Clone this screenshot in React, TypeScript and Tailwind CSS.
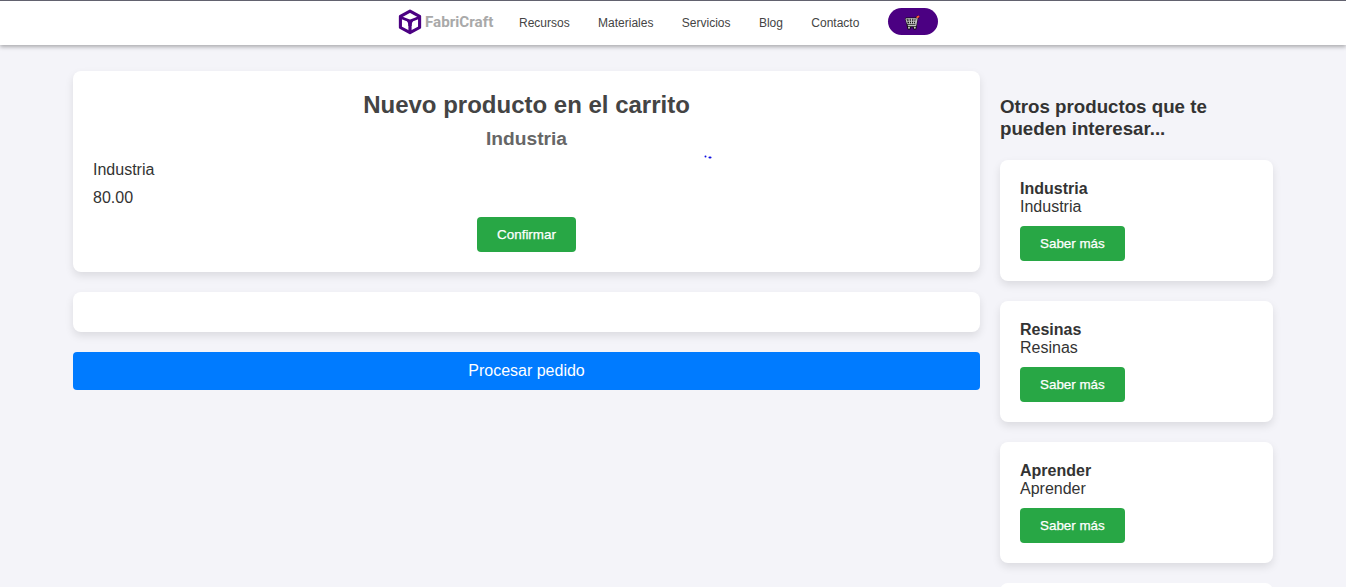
const navLinks = ["Recursos", "Materiales", "Servicios", "Blog", "Contacto"];
const suggestions = ["Industria", "Resinas", "Aprender"];

function Logo() {
  return (
    <svg className="h-[26px] w-6 shrink-0" viewBox="0 0 24 26" fill="none" stroke="#4b0082">
      <path d="M12 2.1 21.6 7.3V18.5L12 23.7 2.4 18.5V7.3Z" strokeWidth="3.1" strokeLinejoin="round" />
      <path d="M3 8.5C7 10.2 9.2 11 12 12 14.8 11 17 10.2 21 8.5" strokeWidth="2.7" />
      <path d="M12 12V23" strokeWidth="3.2" />
      <path d="M7.6 11C9.6 12.4 10.4 14 10.4 17H13.6C13.6 14 14.4 12.4 16.4 11Z" fill="#4b0082" stroke="none" />
    </svg>
  );
}

function CartIcon() {
  return (
    <svg className="mt-[2px] mr-[2px] h-[15px] w-4" viewBox="0 0 16 15" fill="none" strokeLinecap="round" strokeLinejoin="round">
      <path d="M2.5 3.8H12L11.2 9H3.8ZM14 2 12.6 3 11.5 10.8H4" stroke="#111" strokeWidth="2.8" fill="#111" />
      <circle cx="5" cy="12.8" r="1.9" fill="#111" />
      <circle cx="10.8" cy="12.8" r="1.9" fill="#111" />
      <path d="M2.3 3.8H12.2L11.4 8.8H3.8ZM3 6.2H11.5M5 3.8 5.6 8.7M7.5 3.8V8.7M10 3.8 9.5 8.7" stroke="#c4c4c4" strokeWidth="1" />
      <path d="M13.2 2.6 11.7 10.6H4.2" stroke="#c4c4c4" strokeWidth="1.1" />
      <path d="M13.4 2.1 14.4 1.6" stroke="#ff5140" strokeWidth="2" />
      <circle cx="5" cy="12.8" r="1" fill="#c9c9c9" />
      <circle cx="10.8" cy="12.8" r="1" fill="#c9c9c9" />
    </svg>
  );
}

function GreenButton({ label }: { label: string }) {
  return (
    <button className="block h-[35px] rounded-[4px] bg-[#28a745] px-5 text-[13.4px] leading-[15px] text-white [-webkit-text-stroke:0.25px_white]">
      {label}
    </button>
  );
}

export default function App() {
  return (
    <div className="h-[587px] overflow-hidden bg-[#f4f4f9] font-['Liberation_Sans',Arial,sans-serif] text-[#333]">
      <header className="relative flex h-[45px] border-t border-[#62626f] bg-white pl-[398px] shadow-[0_2px_4px_rgba(0,0,0,0.3)]">
        <div className="flex h-[42px] w-[121px] items-center gap-[3px]">
          <Logo />
          <span className="text-[15.2px] font-bold text-[#a9a9a9] [font-family:Roboto,sans-serif]">FabriCraft</span>
        </div>
        <nav className="flex h-[43px] items-center gap-[28.4px] text-[12px] text-[#444]">
          {navLinks.map((link) => (
            <a key={link}>{link}</a>
          ))}
        </nav>
        <button aria-label="Carrito" className="mt-[7px] ml-[28.4px] flex h-[27px] w-[50px] items-center justify-center rounded-full bg-[#4b0082]">
          <CartIcon />
        </button>
      </header>

      <div className="mx-[73px] flex gap-5 pt-[26px]">
        <main className="flex w-[907px] flex-col gap-5">
          <section className="relative flex h-[201px] flex-col rounded-lg bg-white p-5 shadow-[0_4px_8px_rgba(0,0,0,0.1)]">
            <h1 className="text-center text-[24px] leading-7 font-bold text-[#444]">
              Nuevo producto en el carrito
            </h1>
            <h2 className="mt-2 text-center text-[19.2px] leading-[23px] font-bold text-[#666]">Industria</h2>
            <p className="mt-[11px] text-base leading-[18px]">Industria</p>
            <p className="mt-[10px] text-base leading-[18px]">80.00</p>
            <div className="mt-[10px] flex justify-center">
              <GreenButton label="Confirmar" />
            </div>
            <svg className="absolute top-[84px] left-[631px] h-[5px] w-2" viewBox="0 0 8 5" fill="#1010e0">
              <circle cx="1.5" cy="1.6" r="1" />
              <ellipse cx="6" cy="2.5" rx="1.6" ry="1" />
            </svg>
          </section>
          <section className="h-10 rounded-lg bg-white shadow-[0_4px_8px_rgba(0,0,0,0.1)]" />
          <button className="h-[38px] rounded-[4px] bg-[#007bff] text-base leading-[18px] text-white">Procesar pedido</button>
        </main>

        <aside className="flex w-[273px] flex-col gap-5">
          <h3 className="mt-[25px] pr-10 text-[18.72px] leading-[22px] font-bold">
            Otros productos que te pueden interesar...
          </h3>
          {suggestions.map((name) => (
            <article key={name} className="h-[121px] shrink-0 rounded-lg bg-white p-5 shadow-[0_4px_8px_rgba(0,0,0,0.1)]">
              <h4 className="text-base leading-[18px] font-bold">{name}</h4>
              <p className="mb-[10px] text-base leading-[18px]">{name}</p>
              <GreenButton label="Saber más" />
            </article>
          ))}
          <article className="h-[121px] shrink-0 rounded-lg bg-white" />
        </aside>
      </div>
    </div>
  );
}
